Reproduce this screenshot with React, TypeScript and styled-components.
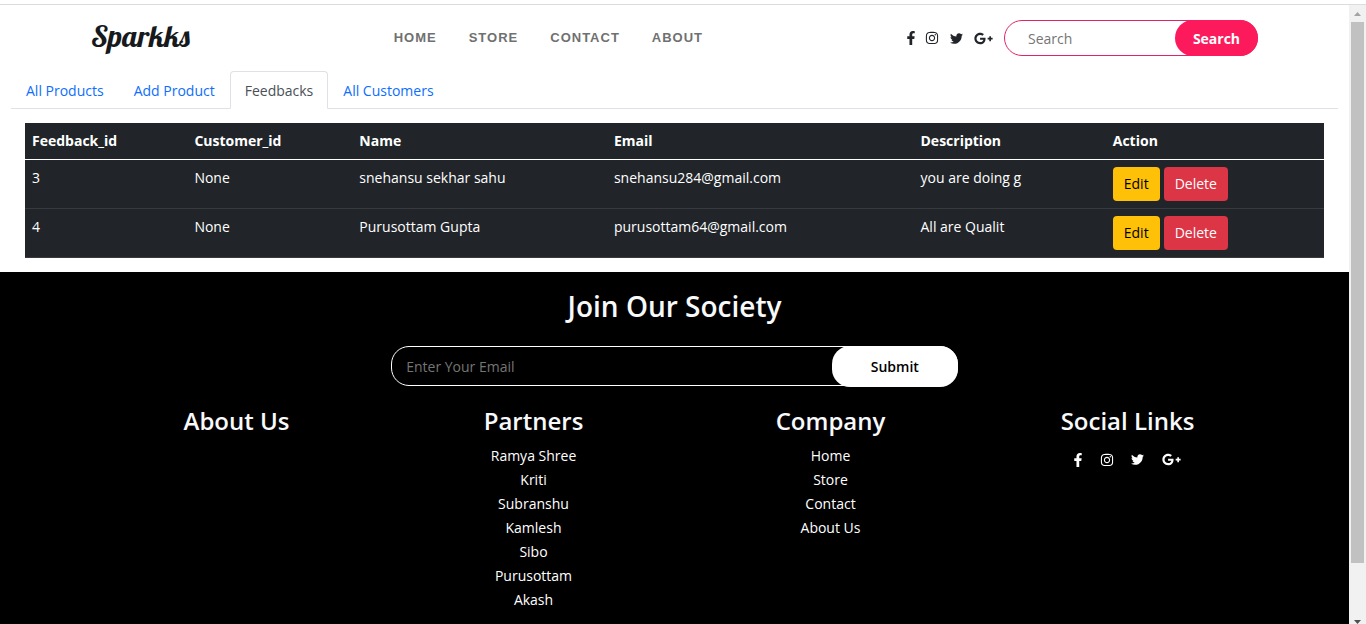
import React from "react";
import styled, { createGlobalStyle } from "styled-components";
import { FaFacebookF, FaInstagram, FaTwitter, FaGooglePlusG } from "react-icons/fa";

const GlobalStyle = createGlobalStyle`
  *, *::before, *::after { box-sizing: border-box; }
  body {
    margin: 0;
    background: #fff;
    color: #212529;
    font-family: "Open Sans", "Noto Sans", sans-serif;
    font-size: 14px;
    line-height: 22px;
  }
  a { color: inherit; text-decoration: none; }
  button, input { font: inherit; margin: 0; }
  h2, h3, ul { margin: 0; padding: 0; }
`;

const Shell = styled.div`
  display: flex;
  flex-direction: column;
  height: 100vh;
  overflow: hidden;
`;

const TopEdge = styled.div`
  flex: none;
  height: 5px;
  border-bottom: 1px solid #dadce0;
`;

const Viewport = styled.div`
  flex: 1;
  min-height: 0;
  display: flex;
`;

const Page = styled.div`
  flex: 1;
  min-width: 0;
  overflow: hidden;
  display: flex;
  flex-direction: column;
`;

const Header = styled.header`
  display: flex;
  align-items: center;
  justify-content: space-between;
  height: 66px;
  flex: none;
  padding: 0 91px;
`;

const Brand = styled.a`
  padding-bottom: 4px;
  font-family: Lobster, "Liberation Serif", serif;
  font-size: 30px;
  line-height: 36px;
  font-weight: 400;
  color: #171a1d;
`;

const Nav = styled.nav`
  display: flex;
  gap: 32px;
  font-family: "Liberation Sans", Arial, sans-serif;
  font-size: 13px;
  font-weight: 700;
  letter-spacing: 1px;
  text-transform: uppercase;
  color: #6f7070;
`;

const HeaderTools = styled.div`
  display: flex;
  align-items: center;
  gap: 11px;
`;

const Socials = styled.div<{ $gap: number }>`
  display: flex;
  align-items: center;
  justify-content: center;
  gap: ${(p) => p.$gap}px;
`;

const SocialLink = styled.a<{ $width: number }>`
  display: flex;
  justify-content: center;
  width: ${(p) => p.$width}px;
  svg { flex: none; }
`;

const SearchForm = styled.form`
  display: flex;
  width: 254px;
  height: 36px;
  border: 1px solid #e0246a;
  border-radius: 18px;
`;

const SearchInput = styled.input`
  flex: 1;
  min-width: 0;
  border: 0;
  outline: 0;
  background: transparent;
  padding: 2px 8px 0 23px;
  &::placeholder { color: #757575; opacity: 1; }
`;

const SearchButton = styled.button`
  width: 83px;
  margin: -1px;
  padding: 2px 0 0;
  border: 0;
  border-radius: 18px;
  background: #fc1a5c;
  color: #fff;
  font-weight: 700;
`;

const Tabs = styled.nav`
  display: flex;
  flex: none;
  margin: 0 11px;
  height: 38px;
  border-bottom: 1px solid #dee2e6;
`;

const Tab = styled.a<{ $active?: boolean }>`
  height: 38px;
  padding: 8px 14px;
  border: 1px solid ${(p) => (p.$active ? "#dee2e6" : "transparent")};
  border-bottom-color: ${(p) => (p.$active ? "#fff" : "transparent")};
  border-radius: 4px 4px 0 0;
  background: ${(p) => (p.$active ? "#fff" : "transparent")};
  color: ${(p) => (p.$active ? "#495057" : "#0d6efd")};
`;

const Panel = styled.main`
  flex: none;
  padding: 14px 25px;
`;

const Table = styled.table`
  width: 100%;
  table-layout: fixed;
  border-collapse: separate;
  border-spacing: 0;
  background: #212529;
  color: #fff;
  th, td {
    padding: 7px;
    text-align: left;
    vertical-align: top;
    border-bottom: 1px solid #373b3e;
  }
  th { border-bottom-color: #fff; font-weight: 700; }
`;

const Col = styled.col<{ $share: number }>`
  width: ${(p) => p.$share}%;
`;

const Actions = styled.div`
  display: flex;
  gap: 4px;
`;

const ActionButton = styled.button<{ $tone: "edit" | "delete" }>`
  height: 34px;
  padding: 0 11px;
  border: 0;
  border-radius: 4px;
  background: ${(p) => (p.$tone === "edit" ? "#ffc107" : "#dc3545")};
  color: ${(p) => (p.$tone === "edit" ? "#000" : "#fff")};
`;

const Footer = styled.footer`
  flex: 1 0 auto;
  display: flex;
  flex-direction: column;
  align-items: center;
  padding-top: 16px;
  background: #000;
  color: #fff;
`;

const FooterTitle = styled.h2`
  font-size: 28px;
  line-height: 36px;
  font-weight: 600;
  color: #f8f9fa;
`;

const JoinForm = styled.form`
  display: flex;
  width: 42%;
  height: 40px;
  margin: 22px 0 17px;
  border: 1px solid #fff;
  border-radius: 18px;
`;

const JoinInput = styled.input`
  flex: 1;
  min-width: 0;
  border: 0;
  outline: 0;
  background: transparent;
  color: #fff;
  padding: 2px 14px 0;
  &::placeholder { color: #757575; opacity: 1; }
`;

const JoinButton = styled.button`
  width: 126px;
  margin: -1px -1px -2px;
  border: 0;
  border-radius: 18px;
  background: #fff;
  color: #000;
  font-weight: 600;
`;

const Columns = styled.div`
  display: grid;
  grid-template-columns: repeat(4, 1fr);
  align-self: stretch;
  padding: 0 73px 0 88px;
  text-align: center;
`;

const ColumnTitle = styled.h3`
  margin-bottom: 5px;
  font-size: 24px;
  line-height: 36px;
  font-weight: 600;
  color: #f8f9fa;
`;

const LinkList = styled.ul`
  list-style: none;
  line-height: 24px;
`;

const SocialRow = styled.div`
  padding: 6px 0;
`;

const Scrollbar = styled.div`
  flex: none;
  width: 17px;
  display: flex;
  flex-direction: column;
  background: #f1f1f1;
`;

const ScrollArrow = styled.div<{ $down?: boolean }>`
  flex: none;
  display: flex;
  justify-content: center;
  align-items: ${(p) => (p.$down ? "flex-end" : "center")};
  height: ${(p) => (p.$down ? 12 : 17)}px;
  color: ${(p) => (p.$down ? "#505050" : "#a3a3a3")};
`;

const ScrollThumb = styled.div`
  flex: 11;
  margin: 0 2px;
  background: #c1c1c1;
`;

const ScrollRest = styled.div`
  flex: 1;
`;

const rows = [
  { id: 3, customer: "None", name: "snehansu sekhar sahu", email: "snehansu284@gmail.com", text: "you are doing g" },
  { id: 4, customer: "None", name: "Purusottam Gupta", email: "purusottam64@gmail.com", text: "All are Qualit" },
];

const columns = [
  { label: "Feedback_id", share: 12.5 },
  { label: "Customer_id", share: 12.7 },
  { label: "Name", share: 19.6 },
  { label: "Email", share: 23.6 },
  { label: "Description", share: 14.8 },
  { label: "Action", share: 16.8 },
];

const partners = ["Ramya Shree", "Kriti", "Subranshu", "Kamlesh", "Sibo", "Purusottam", "Akash"];
const company = ["Home", "Store", "Contact", "About Us"];

function SocialLinks({ gap }: { gap: number }) {
  return (
    <Socials $gap={gap}>
      <SocialLink href="#facebook" aria-label="Facebook" $width={8}><FaFacebookF size={14} /></SocialLink>
      <SocialLink href="#instagram" aria-label="Instagram" $width={13}><FaInstagram size={14} /></SocialLink>
      <SocialLink href="#twitter" aria-label="Twitter" $width={13}><FaTwitter size={13} /></SocialLink>
      <SocialLink href="#google" aria-label="Google Plus" $width={19}><FaGooglePlusG size={19} /></SocialLink>
    </Socials>
  );
}

function FooterList({ items }: { items: string[] }) {
  return (
    <LinkList>
      {items.map((item) => (
        <li key={item}><a href="#link">{item}</a></li>
      ))}
    </LinkList>
  );
}

export default function App() {
  const stop = (e: React.FormEvent) => e.preventDefault();
  return (
    <Shell>
      <GlobalStyle />
      <TopEdge />
      <Viewport>
        <Page>
          <Header>
            <Brand href="#home">Sparkks</Brand>
            <Nav>
              {["Home", "Store", "Contact", "About"].map((item) => (
                <a key={item} href={`#${item}`}>{item}</a>
              ))}
            </Nav>
            <HeaderTools>
              <SocialLinks gap={11} />
              <SearchForm onSubmit={stop}>
                <SearchInput type="text" placeholder="Search" aria-label="Search" />
                <SearchButton type="submit">Search</SearchButton>
              </SearchForm>
            </HeaderTools>
          </Header>
          <Tabs>
            <Tab href="#products">All Products</Tab>
            <Tab href="#add">Add Product</Tab>
            <Tab href="#feedbacks" $active aria-current="page">Feedbacks</Tab>
            <Tab href="#customers">All Customers</Tab>
          </Tabs>
          <Panel>
            <Table>
              <colgroup>
                {columns.map((c) => <Col key={c.label} $share={c.share} />)}
              </colgroup>
              <thead>
                <tr>{columns.map((c) => <th key={c.label} scope="col">{c.label}</th>)}</tr>
              </thead>
              <tbody>
                {rows.map((r) => (
                  <tr key={r.id}>
                    <td>{r.id}</td>
                    <td>{r.customer}</td>
                    <td>{r.name}</td>
                    <td>{r.email}</td>
                    <td>{r.text}</td>
                    <td>
                      <Actions>
                        <ActionButton type="button" $tone="edit">Edit</ActionButton>
                        <ActionButton type="button" $tone="delete">Delete</ActionButton>
                      </Actions>
                    </td>
                  </tr>
                ))}
              </tbody>
            </Table>
          </Panel>
          <Footer>
            <FooterTitle>Join Our Society</FooterTitle>
            <JoinForm onSubmit={stop}>
              <JoinInput type="email" placeholder="Enter Your Email" aria-label="Email" />
              <JoinButton type="submit">Submit</JoinButton>
            </JoinForm>
            <Columns>
              <section><ColumnTitle>About Us</ColumnTitle></section>
              <section>
                <ColumnTitle>Partners</ColumnTitle>
                <FooterList items={partners} />
              </section>
              <section>
                <ColumnTitle>Company</ColumnTitle>
                <FooterList items={company} />
              </section>
              <section>
                <ColumnTitle>Social Links</ColumnTitle>
                <SocialRow><SocialLinks gap={18} /></SocialRow>
              </section>
            </Columns>
          </Footer>
        </Page>
        <Scrollbar aria-hidden="true">
          <ScrollArrow>
            <svg width="7" height="4" viewBox="0 0 7 4"><path d="M0 4L3.5 0L7 4Z" fill="currentColor" /></svg>
          </ScrollArrow>
          <ScrollThumb />
          <ScrollRest />
          <ScrollArrow $down>
            <svg width="7" height="4" viewBox="0 0 7 4"><path d="M0 0L3.5 4L7 0Z" fill="currentColor" /></svg>
          </ScrollArrow>
        </Scrollbar>
      </Viewport>
    </Shell>
  );
}
